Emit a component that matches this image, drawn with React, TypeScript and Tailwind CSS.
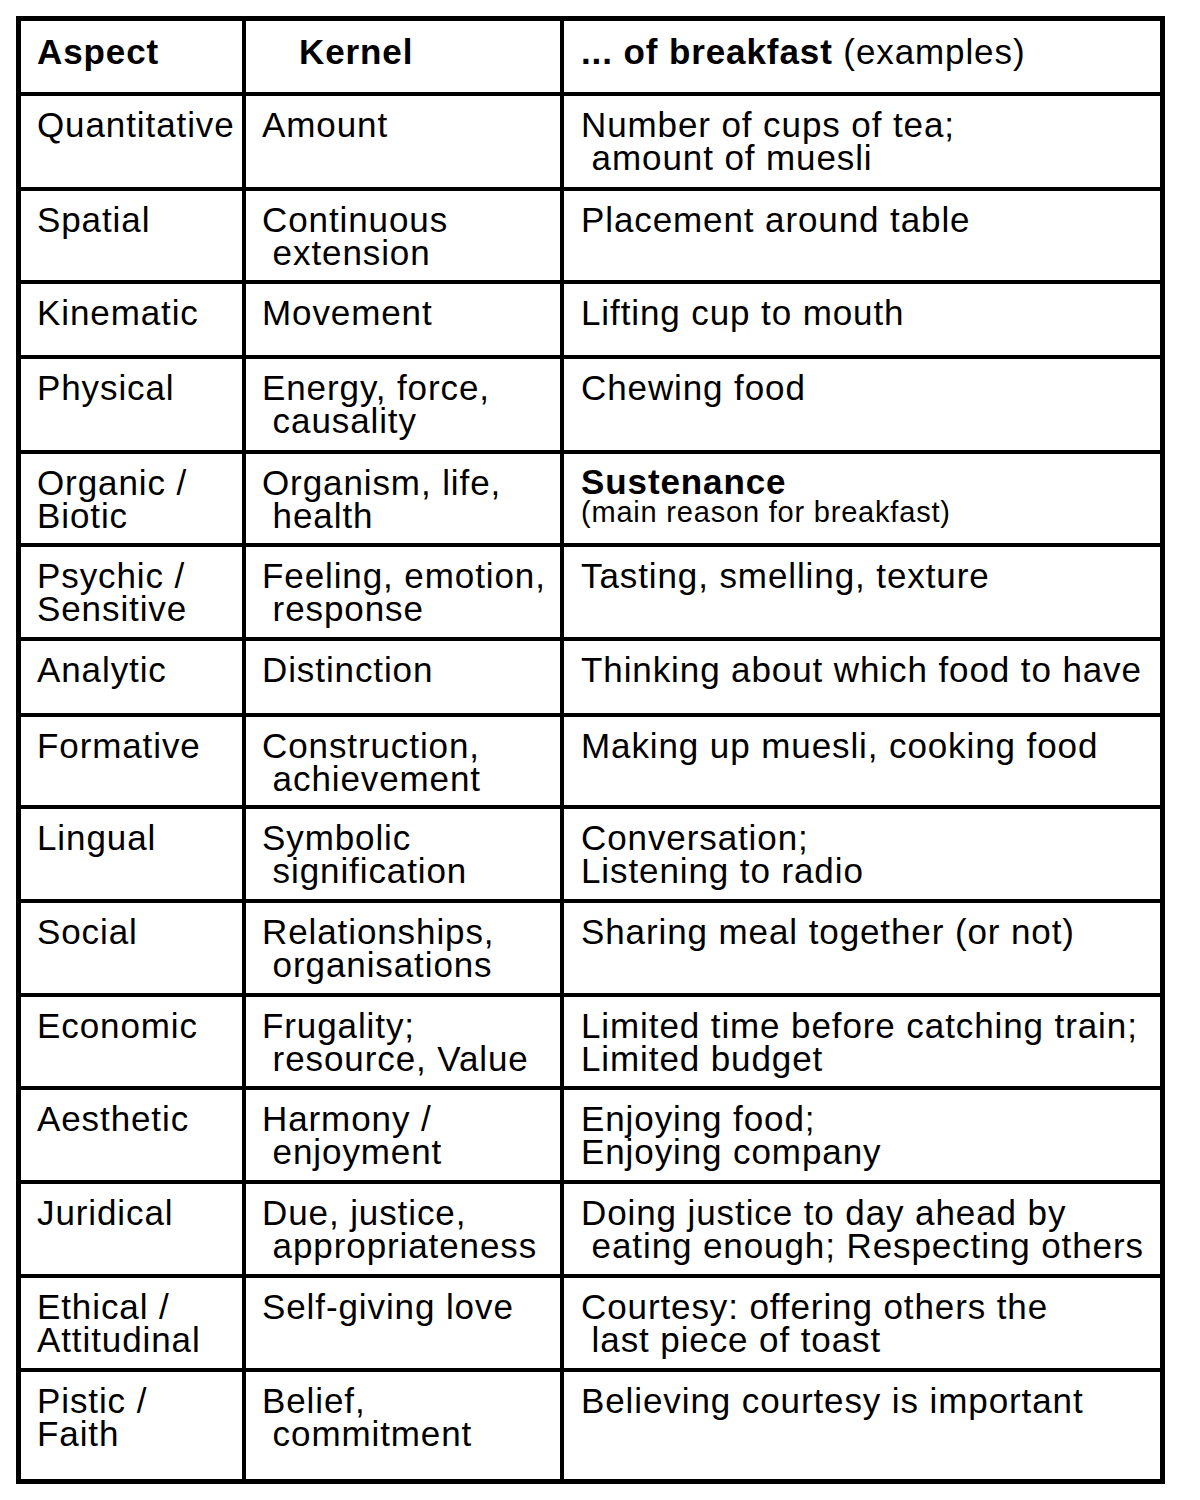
import type { ReactNode } from "react";

type Row = {
  aspect: string;
  kernel: string;
  example: ReactNode;
  h: number;
};

const rows: Row[] = [
  { aspect: "Quantitative", kernel: "Amount", example: "Number of cups of tea;\n amount of muesli", h: 91 },
  { aspect: "Spatial", kernel: "Continuous\n extension", example: "Placement around table", h: 89 },
  { aspect: "Kinematic", kernel: "Movement", example: "Lifting cup to mouth", h: 71 },
  { aspect: "Physical", kernel: "Energy, force,\n causality", example: "Chewing food", h: 91 },
  {
    aspect: "Organic /\nBiotic",
    kernel: "Organism, life,\n health",
    example: (
      <>
        <span className="block font-bold leading-[31px]">Sustenance</span>
        <span className="block text-[29px] leading-[30px] tracking-[0.8px]">(main reason for breakfast)</span>
      </>
    ),
    h: 89,
  },
  { aspect: "Psychic /\nSensitive", kernel: "Feeling, emotion,\n response", example: "Tasting, smelling, texture", h: 90 },
  { aspect: "Analytic", kernel: "Distinction", example: "Thinking about which food to have", h: 72 },
  { aspect: "Formative", kernel: "Construction,\n achievement", example: "Making up muesli, cooking food", h: 88 },
  { aspect: "Lingual", kernel: "Symbolic\n signification", example: "Conversation;\nListening to radio", h: 90 },
  { aspect: "Social", kernel: "Relationships,\n organisations", example: "Sharing meal together (or not)", h: 90 },
  { aspect: "Economic", kernel: "Frugality;\n resource, Value", example: "Limited time before catching train;\nLimited budget", h: 89 },
  { aspect: "Aesthetic", kernel: "Harmony /\n enjoyment", example: "Enjoying food;\nEnjoying company", h: 90 },
  { aspect: "Juridical", kernel: "Due, justice,\n appropriateness", example: "Doing justice to day ahead by\n eating enough; Respecting others", h: 90 },
  { aspect: "Ethical /\nAttitudinal", kernel: "Self-giving love", example: "Courtesy: offering others the\n last piece of toast", h: 90 },
  { aspect: "Pistic /\nFaith", kernel: "Belief,\n commitment", example: "Believing courtesy is important", h: 107 },
];

const cell = "whitespace-pre pt-3 pl-4";

export default function App() {
  return (
    <div className="min-h-[1500px] bg-white pt-4 pl-4 text-black" style={{ fontFamily: '"Liberation Sans", Arial, sans-serif' }}>
      <div className="w-[1149px] border-[5px] border-black text-[35px] leading-[33px] tracking-[0.9px]">
        {/* header */}
        <div className="grid h-[71px] grid-cols-[221px_318px_600px] font-bold">
          <div className="pt-[14px] pl-4">Aspect</div>
          <div className="border-l-4 border-black pt-[14px] pl-[53px]">Kernel</div>
          <div className="border-l-4 border-black pt-[14px] pl-[17px]">
            ... of breakfast <span className="font-normal">(examples)</span>
          </div>
        </div>

        {rows.map((r) => (
          <div
            key={r.aspect}
            className="grid grid-cols-[221px_318px_600px] border-t-4 border-black"
            style={{ height: r.h + 4 }}
          >
            <div className={cell}>{r.aspect}</div>
            <div className={`${cell} border-l-4 border-black`}>{r.kernel}</div>
            <div className={`${cell} border-l-4 border-black pl-[17px]`}>{r.example}</div>
          </div>
        ))}
      </div>
    </div>
  );
}
